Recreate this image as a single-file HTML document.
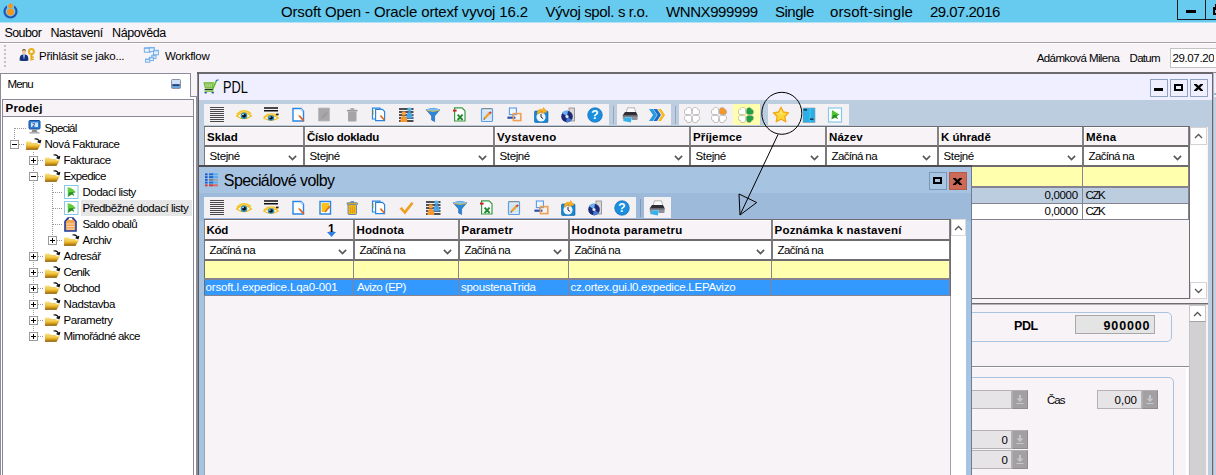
<!DOCTYPE html><html><head><meta charset="utf-8"><title>Orsoft Open</title><style>
html,body{margin:0;padding:0}
body{width:1216px;height:475px;overflow:hidden;position:relative;background:#f7f3f7;font-family:"Liberation Sans",sans-serif;font-size:11px;color:#000}
div,span{position:absolute;box-sizing:border-box;white-space:nowrap}
svg{position:absolute;overflow:visible}
.t{line-height:14px;height:14px}
.b{font-weight:bold;letter-spacing:.55px}
.hc{background:#f7f3f7;border:1px solid #848284;border-top:0;border-bottom:2px solid #6e6c6e;box-shadow:inset 1px 1px 0 #fff;height:20px}
.hc span{left:3px;top:2px;font-weight:bold;letter-spacing:.55px;line-height:14px}
.fc{background:#fff;border:1px solid #7a787a;border-top:0;border-bottom:2px solid #6e6c6e;height:20px}
.fc span{left:5px;top:2px;line-height:14px}
.btn{background:#f4f1f5;height:21px;width:27px}
.wb{border:1px solid #8ea2c2;background:#efefff;width:18px;height:18px}
</style></head><body><svg width="0" height="0" style="left:0;top:0"><defs><linearGradient id="fg1" x1="0" y1="0" x2="0" y2="1"><stop offset="0" stop-color="#fbd85a"/><stop offset=".5" stop-color="#e0a820"/><stop offset="1" stop-color="#8a5a08"/></linearGradient><linearGradient id="fg2" x1="0" y1="0" x2="0" y2="1"><stop offset="0" stop-color="#ffe680"/><stop offset="1" stop-color="#c89018"/></linearGradient></defs></svg>
<div style="left:0;top:0;width:1216px;height:22px;background:#67cbef"></div>
<div style="left:0;top:22px;width:1216px;height:1px;background:#b4e0f3"></div>
<span style="left:281px;top:2px;font-size:15px;line-height:20px;letter-spacing:-0.15px">Orsoft Open - Oracle ortexf vyvoj 16.2</span>
<span style="left:545.5px;top:2px;font-size:15px;line-height:20px;letter-spacing:-0.36px">Vývoj spol. s r.o.</span>
<span style="left:666px;top:2px;font-size:15px;line-height:20px;letter-spacing:-0.41px">WNNX999999</span>
<span style="left:775px;top:2px;font-size:15px;line-height:20px;letter-spacing:-0.49px">Single</span>
<span style="left:830px;top:2px;font-size:15px;line-height:20px;letter-spacing:0.1px">orsoft-single</span>
<span style="left:930px;top:2px;font-size:15px;line-height:20px;letter-spacing:-0.53px">29.07.2016</span>
<svg style="left:3px;top:3px" width="16" height="16" viewBox="0 0 16 16"><circle cx="7.5" cy="8.5" r="6" fill="none" stroke="#2255b8" stroke-width="2.2"/><rect x="4" y="0" width="7" height="5" fill="#67cbef"/><circle cx="7.5" cy="9" r="3.6" fill="#f7941d"/><circle cx="7.5" cy="3" r="2.4" fill="#f7941d"/></svg>
<div style="left:1177px;top:-1px;width:29px;height:21px;border:1px solid #1c1c1c"></div>
<div style="left:1186px;top:10px;width:10px;height:3px;background:#000"></div>
<div style="left:1205px;top:-1px;width:28px;height:21px;border:1px solid #1c1c1c"></div>
<div style="left:1213px;top:7px;width:10px;height:8px;border:2px solid #000;border-top-width:3px"></div>
<div style="left:1215px;top:4px;width:10px;height:3px;background:#000"></div>
<span style="left:4.5px;top:26px;font-size:12.5px;line-height:15px;letter-spacing:-0.6px">Soubor</span>
<span style="left:50.5px;top:26px;font-size:12.5px;line-height:15px;letter-spacing:-0.44px">Nastavení</span>
<span style="left:112px;top:26px;font-size:12.5px;line-height:15px;letter-spacing:-0.4px">Nápověda</span>
<div style="left:0;top:42px;width:1216px;height:1px;background:#a5a3a5"></div>
<div style="left:0;top:43px;width:1216px;height:1px;background:#fff"></div>
<div style="left:4px;top:45px;width:2px;height:2px;background:#c4c2c4"></div>
<div style="left:4px;top:49px;width:2px;height:2px;background:#c4c2c4"></div>
<div style="left:4px;top:53px;width:2px;height:2px;background:#c4c2c4"></div>
<div style="left:4px;top:57px;width:2px;height:2px;background:#c4c2c4"></div>
<div style="left:4px;top:61px;width:2px;height:2px;background:#c4c2c4"></div>
<div style="left:4px;top:65px;width:2px;height:2px;background:#c4c2c4"></div>
<span style="left:39px;top:49px;font-size:11.5px;line-height:14px;letter-spacing:-0.24px">Přihlásit se jako...</span>
<span style="left:165px;top:49px;font-size:11.5px;line-height:14px;letter-spacing:-0.34px">Workflow</span>
<svg style="left:19px;top:48px" width="16" height="14" viewBox="0 0 16 14"><path d="M.6 12.6 Q.4 7.2 3 6.8 L5 6.2 L7 6.8 Q9.6 7.2 9.4 12.6 Q5 13.6 .6 12.6Z" fill="#16307e"/><path d="M4 6.6 L5 11.8 L6 6.6Z" fill="#e8f0ff"/><path d="M4.7 7 L5 11 L5.3 7Z" fill="#2a6cd0"/><ellipse cx="5" cy="3.8" rx="2" ry="2.5" fill="#f0c8a0"/><path d="M2.9 3.6 Q3 .8 5 .9 Q7 .8 7.1 3.6 Q6 2 5 2.2 Q4 2 2.9 3.6Z" fill="#6a4420"/><circle cx="12.4" cy="3.6" r="2.5" fill="none" stroke="#e8b018" stroke-width="2"/><rect x="11.4" y="5.8" width="2" height="6.6" fill="#e0a410"/><rect x="13.2" y="8.4" width="1.6" height="1.4" fill="#e0a410"/><rect x="13.2" y="10.6" width="1.6" height="1.4" fill="#e0a410"/><rect x="11.4" y="5.8" width=".8" height="6.6" fill="#f8d040"/></svg>
<svg style="left:144px;top:47px" width="16" height="16" viewBox="0 0 16 16"><rect x="0.3" y="0.8" width="6.3" height="4.4" fill="#e8f2fc" stroke="#6aa8e8" stroke-width=".9"/><rect x="0.3" y="0.8" width="6.3" height="1.1" fill="#7ab4ec"/><rect x="5.3" y="0.4" width="5" height="4.2" fill="#e8f2fc" stroke="#6aa8e8" stroke-width=".9"/><rect x="5.3" y="0.4" width="5" height="1.1" fill="#7ab4ec"/><rect x="9.5" y="3.3" width="4.9" height="4.5" fill="#e8f2fc" stroke="#6aa8e8" stroke-width=".9"/><rect x="9.5" y="3.3" width="4.9" height="1.1" fill="#7ab4ec"/><rect x="7.8" y="8.2" width="4.2" height="3.3" fill="#e8f2fc" stroke="#6aa8e8" stroke-width=".9"/><rect x="7.8" y="8.2" width="4.2" height="1.1" fill="#7ab4ec"/><rect x="5.3" y="10.3" width="4.2" height="3.3" fill="#e8f2fc" stroke="#6aa8e8" stroke-width=".9"/><rect x="5.3" y="10.3" width="4.2" height="1.1" fill="#7ab4ec"/><rect x="1.6" y="12" width="4.2" height="3.2" fill="#e8f2fc" stroke="#6aa8e8" stroke-width=".9"/><rect x="1.6" y="12" width="4.2" height="1.1" fill="#7ab4ec"/></svg>
<span style="left:1036.7px;top:51px;font-size:11.5px;line-height:14px;letter-spacing:-0.59px">Adámková Milena</span>
<span style="left:1129.6px;top:51px;font-size:11.5px;line-height:14px;letter-spacing:-0.75px">Datum</span>
<div style="left:1170px;top:48px;width:60px;height:20px;background:#fff;border:1px solid #c3c3c3"></div>
<span style="left:1172.5px;top:51px;font-size:11.5px;line-height:14px;letter-spacing:-0.38px">29.07.2016</span>
<div style="left:1214px;top:49px;width:2px;height:18px;background:#fff"></div>
<div style="left:0;top:73px;width:197px;height:410px;border:1px solid #8e8c9a;border-top:0;background:#fff"></div>
<div style="left:0;top:73px;width:191px;height:1px;background:#8e8c9a"></div>
<div style="left:191px;top:73px;width:6px;height:24px;background:#f7f3f7"></div>
<div style="left:190px;top:73px;width:1px;height:24px;background:#8e8c9a"></div>
<div style="left:190px;top:96px;width:7px;height:1px;background:#8e8c9a"></div>
<span style="left:7.5px;top:77px;font-size:11.5px;line-height:14px;letter-spacing:-0.85px">Menu</span>
<svg style="left:171px;top:79px" width="10" height="10" viewBox="0 0 10 10"><rect x=".5" y=".5" width="9" height="9" rx="1" fill="#6aa2e0" stroke="#8a94a4"/><rect x="1" y="1" width="8" height="4" fill="#cfe0f6"/><rect x="1.5" y="5.4" width="7" height="1.4" fill="#1a2a58"/></svg>
<div style="left:2px;top:99px;width:192px;height:18px;border:1px solid #8a8896;background:#f7f3f7"></div>
<span style="left:5.5px;top:101px;font-size:11.5px;line-height:14px;letter-spacing:0.22px;font-weight:bold">Prodej</span>
<div style="left:2px;top:117px;width:192px;height:360px;border:1px solid #8a8896;border-top:0;background:#fff"></div>
<div style="left:14px;top:128px;width:1px;height:11px;background:repeating-linear-gradient(180deg,#9a9a9a 0 1px,transparent 1px 2px)"></div>
<div style="left:15px;top:128px;width:11px;height:1px;background:repeating-linear-gradient(90deg,#9a9a9a 0 1px,transparent 1px 2px)"></div>
<div style="left:33px;top:152px;width:1px;height:184px;background:repeating-linear-gradient(180deg,#9a9a9a 0 1px,transparent 1px 2px)"></div>
<div style="left:52px;top:184px;width:1px;height:56px;background:repeating-linear-gradient(180deg,#9a9a9a 0 1px,transparent 1px 2px)"></div>
<svg style="left:27px;top:120px" width="15" height="15" viewBox="0 0 15 15"><rect x="2" y=".5" width="11" height="8.5" rx="1" fill="#2a7fd8" stroke="#1a4f98"/><rect x="4" y="2.5" width="7" height="4.5" fill="#cfe6ff"/><path d="M5.5 9.5 H9.5 L10.5 12 H4.5Z" fill="#8a8a8a"/><rect x="2.5" y="12" width="10" height="1.6" fill="#b0b0b0"/><text x="5.2" y="6.8" font-size="5" font-family="Liberation Sans" fill="#1a3f88" font-weight="bold">2</text></svg>
<span style="left:44.5px;top:121px;font-size:11.5px;line-height:14px;letter-spacing:-0.83px">Speciál</span>
<div style="left:15px;top:144px;width:10px;height:1px;background:repeating-linear-gradient(90deg,#9a9a9a 0 1px,transparent 1px 2px)"></div>
<svg style="left:25px;top:137px" width="17" height="14" viewBox="0 0 17 14"><path d="M1 4.5 H5.5 L7 6 H12.5 V12.5 H1 Z" fill="url(#fg2)"/><path d="M0.6 12.8 L3.6 7.2 H15.8 L12.6 12.8 Z" fill="url(#fg1)"/><path d="M9.5 2 Q13.5 1 14.8 5 M12.6 4.6 L15 5.6 L15.8 3" fill="none" stroke="#111" stroke-width="1.2"/></svg>
<div style="left:10px;top:140px;width:9px;height:9px;border:1px solid #9a9a9a;background:#fff"></div><div style="left:12px;top:144px;width:5px;height:1px;background:#000"></div>
<span style="left:44.5px;top:137px;font-size:11.5px;line-height:14px;letter-spacing:-0.44px">Nová Fakturace</span>
<div style="left:34px;top:160px;width:10px;height:1px;background:repeating-linear-gradient(90deg,#9a9a9a 0 1px,transparent 1px 2px)"></div>
<svg style="left:44px;top:153px" width="17" height="14" viewBox="0 0 17 14"><path d="M1 4.5 H5.5 L7 6 H12.5 V12.5 H1 Z" fill="url(#fg2)"/><path d="M0.6 12.8 L3.6 7.2 H15.8 L12.6 12.8 Z" fill="url(#fg1)"/><path d="M9.5 2 Q13.5 1 14.8 5 M12.6 4.6 L15 5.6 L15.8 3" fill="none" stroke="#111" stroke-width="1.2"/></svg>
<div style="left:29px;top:156px;width:9px;height:9px;border:1px solid #9a9a9a;background:#fff"></div><div style="left:31px;top:160px;width:5px;height:1px;background:#000"></div><div style="left:33px;top:158px;width:1px;height:5px;background:#000"></div>
<span style="left:63.5px;top:153px;font-size:11.5px;line-height:14px;letter-spacing:-0.43px">Fakturace</span>
<div style="left:34px;top:176px;width:10px;height:1px;background:repeating-linear-gradient(90deg,#9a9a9a 0 1px,transparent 1px 2px)"></div>
<svg style="left:44px;top:169px" width="17" height="14" viewBox="0 0 17 14"><path d="M1 4.5 H5.5 L7 6 H12.5 V12.5 H1 Z" fill="url(#fg2)"/><path d="M0.6 12.8 L3.6 7.2 H15.8 L12.6 12.8 Z" fill="url(#fg1)"/><path d="M9.5 2 Q13.5 1 14.8 5 M12.6 4.6 L15 5.6 L15.8 3" fill="none" stroke="#111" stroke-width="1.2"/></svg>
<div style="left:29px;top:172px;width:9px;height:9px;border:1px solid #9a9a9a;background:#fff"></div><div style="left:31px;top:176px;width:5px;height:1px;background:#000"></div>
<span style="left:63.5px;top:169px;font-size:11.5px;line-height:14px;letter-spacing:-0.64px">Expedice</span>
<div style="left:53px;top:192px;width:10px;height:1px;background:repeating-linear-gradient(90deg,#9a9a9a 0 1px,transparent 1px 2px)"></div>
<svg style="left:64px;top:185px" width="15" height="14" viewBox="0 0 15 14"><rect x=".5" y=".5" width="13.5" height="13" fill="#fff" stroke="#86c8ec"/><path d="M3.6 2.2 Q8.4 3 11.8 7 L8.8 8 L10.4 10.8 L7.6 9.6 L3.8 11.8 Z" fill="#62cc40"/><path d="M3.8 11.8 L5.2 7.2 L11.8 7 L8.8 8 L10.4 10.8 L7.6 9.6 Z" fill="#2a8e30"/></svg>
<span style="left:82.5px;top:185px;font-size:11.5px;line-height:14px;letter-spacing:-0.51px">Dodací listy</span>
<div style="left:53px;top:208px;width:10px;height:1px;background:repeating-linear-gradient(90deg,#9a9a9a 0 1px,transparent 1px 2px)"></div>
<svg style="left:64px;top:201px" width="15" height="14" viewBox="0 0 15 14"><rect x=".5" y=".5" width="13.5" height="13" fill="#fff" stroke="#86c8ec"/><path d="M3.6 2.2 Q8.4 3 11.8 7 L8.8 8 L10.4 10.8 L7.6 9.6 L3.8 11.8 Z" fill="#62cc40"/><path d="M3.8 11.8 L5.2 7.2 L11.8 7 L8.8 8 L10.4 10.8 L7.6 9.6 Z" fill="#2a8e30"/></svg>
<div style="left:81px;top:200px;width:111px;height:16px;background:#e6e6e6"></div>
<span style="left:82.5px;top:201px;font-size:11.5px;line-height:14px;letter-spacing:-0.48px">Předběžné dodací listy</span>
<div style="left:53px;top:224px;width:10px;height:1px;background:repeating-linear-gradient(90deg,#9a9a9a 0 1px,transparent 1px 2px)"></div>
<svg style="left:64px;top:217px" width="14" height="15" viewBox="0 0 14 15"><path d="M1 4.5 L4 1 H9 L12 4.5 V14 H1 Z" fill="#f2a456" stroke="#1a3aa0" stroke-width="1.6"/><path d="M5 1 H8 L8 3 H5Z" fill="#fff"/><path d="M2.5 7 H10.5 M2.5 9.5 H10.5 M2.5 12 H10.5" stroke="#fbd8b0" stroke-width="1"/></svg>
<span style="left:82.5px;top:217px;font-size:11.5px;line-height:14px;letter-spacing:-0.57px">Saldo obalů</span>
<div style="left:53px;top:240px;width:10px;height:1px;background:repeating-linear-gradient(90deg,#9a9a9a 0 1px,transparent 1px 2px)"></div>
<svg style="left:63px;top:233px" width="17" height="14" viewBox="0 0 17 14"><path d="M1 4.5 H5.5 L7 6 H12.5 V12.5 H1 Z" fill="url(#fg2)"/><path d="M0.6 12.8 L3.6 7.2 H15.8 L12.6 12.8 Z" fill="url(#fg1)"/><path d="M9.5 2 Q13.5 1 14.8 5 M12.6 4.6 L15 5.6 L15.8 3" fill="none" stroke="#111" stroke-width="1.2"/></svg>
<div style="left:48px;top:236px;width:9px;height:9px;border:1px solid #9a9a9a;background:#fff"></div><div style="left:50px;top:240px;width:5px;height:1px;background:#000"></div><div style="left:52px;top:238px;width:1px;height:5px;background:#000"></div>
<span style="left:82.5px;top:233px;font-size:11.5px;line-height:14px;letter-spacing:-0.54px">Archiv</span>
<div style="left:34px;top:256px;width:10px;height:1px;background:repeating-linear-gradient(90deg,#9a9a9a 0 1px,transparent 1px 2px)"></div>
<svg style="left:44px;top:249px" width="17" height="14" viewBox="0 0 17 14"><path d="M1 4.5 H5.5 L7 6 H12.5 V12.5 H1 Z" fill="url(#fg2)"/><path d="M0.6 12.8 L3.6 7.2 H15.8 L12.6 12.8 Z" fill="url(#fg1)"/><path d="M9.5 2 Q13.5 1 14.8 5 M12.6 4.6 L15 5.6 L15.8 3" fill="none" stroke="#111" stroke-width="1.2"/></svg>
<div style="left:29px;top:252px;width:9px;height:9px;border:1px solid #9a9a9a;background:#fff"></div><div style="left:31px;top:256px;width:5px;height:1px;background:#000"></div><div style="left:33px;top:254px;width:1px;height:5px;background:#000"></div>
<span style="left:63.5px;top:249px;font-size:11.5px;line-height:14px;letter-spacing:-0.44px">Adresář</span>
<div style="left:34px;top:272px;width:10px;height:1px;background:repeating-linear-gradient(90deg,#9a9a9a 0 1px,transparent 1px 2px)"></div>
<svg style="left:44px;top:265px" width="17" height="14" viewBox="0 0 17 14"><path d="M1 4.5 H5.5 L7 6 H12.5 V12.5 H1 Z" fill="url(#fg2)"/><path d="M0.6 12.8 L3.6 7.2 H15.8 L12.6 12.8 Z" fill="url(#fg1)"/><path d="M9.5 2 Q13.5 1 14.8 5 M12.6 4.6 L15 5.6 L15.8 3" fill="none" stroke="#111" stroke-width="1.2"/></svg>
<div style="left:29px;top:268px;width:9px;height:9px;border:1px solid #9a9a9a;background:#fff"></div><div style="left:31px;top:272px;width:5px;height:1px;background:#000"></div><div style="left:33px;top:270px;width:1px;height:5px;background:#000"></div>
<span style="left:63.5px;top:265px;font-size:11.5px;line-height:14px;letter-spacing:-0.9px">Ceník</span>
<div style="left:34px;top:288px;width:10px;height:1px;background:repeating-linear-gradient(90deg,#9a9a9a 0 1px,transparent 1px 2px)"></div>
<svg style="left:44px;top:281px" width="17" height="14" viewBox="0 0 17 14"><path d="M1 4.5 H5.5 L7 6 H12.5 V12.5 H1 Z" fill="url(#fg2)"/><path d="M0.6 12.8 L3.6 7.2 H15.8 L12.6 12.8 Z" fill="url(#fg1)"/><path d="M9.5 2 Q13.5 1 14.8 5 M12.6 4.6 L15 5.6 L15.8 3" fill="none" stroke="#111" stroke-width="1.2"/></svg>
<div style="left:29px;top:284px;width:9px;height:9px;border:1px solid #9a9a9a;background:#fff"></div><div style="left:31px;top:288px;width:5px;height:1px;background:#000"></div><div style="left:33px;top:286px;width:1px;height:5px;background:#000"></div>
<span style="left:63.5px;top:281px;font-size:11.5px;line-height:14px;letter-spacing:-0.67px">Obchod</span>
<div style="left:34px;top:304px;width:10px;height:1px;background:repeating-linear-gradient(90deg,#9a9a9a 0 1px,transparent 1px 2px)"></div>
<svg style="left:44px;top:297px" width="17" height="14" viewBox="0 0 17 14"><path d="M1 4.5 H5.5 L7 6 H12.5 V12.5 H1 Z" fill="url(#fg2)"/><path d="M0.6 12.8 L3.6 7.2 H15.8 L12.6 12.8 Z" fill="url(#fg1)"/><path d="M9.5 2 Q13.5 1 14.8 5 M12.6 4.6 L15 5.6 L15.8 3" fill="none" stroke="#111" stroke-width="1.2"/></svg>
<div style="left:29px;top:300px;width:9px;height:9px;border:1px solid #9a9a9a;background:#fff"></div><div style="left:31px;top:304px;width:5px;height:1px;background:#000"></div><div style="left:33px;top:302px;width:1px;height:5px;background:#000"></div>
<span style="left:63.5px;top:297px;font-size:11.5px;line-height:14px;letter-spacing:-0.37px">Nadstavba</span>
<div style="left:34px;top:320px;width:10px;height:1px;background:repeating-linear-gradient(90deg,#9a9a9a 0 1px,transparent 1px 2px)"></div>
<svg style="left:44px;top:313px" width="17" height="14" viewBox="0 0 17 14"><path d="M1 4.5 H5.5 L7 6 H12.5 V12.5 H1 Z" fill="url(#fg2)"/><path d="M0.6 12.8 L3.6 7.2 H15.8 L12.6 12.8 Z" fill="url(#fg1)"/><path d="M9.5 2 Q13.5 1 14.8 5 M12.6 4.6 L15 5.6 L15.8 3" fill="none" stroke="#111" stroke-width="1.2"/></svg>
<div style="left:29px;top:316px;width:9px;height:9px;border:1px solid #9a9a9a;background:#fff"></div><div style="left:31px;top:320px;width:5px;height:1px;background:#000"></div><div style="left:33px;top:318px;width:1px;height:5px;background:#000"></div>
<span style="left:63.5px;top:313px;font-size:11.5px;line-height:14px;letter-spacing:-0.44px">Parametry</span>
<div style="left:34px;top:336px;width:10px;height:1px;background:repeating-linear-gradient(90deg,#9a9a9a 0 1px,transparent 1px 2px)"></div>
<svg style="left:44px;top:329px" width="17" height="14" viewBox="0 0 17 14"><path d="M1 4.5 H5.5 L7 6 H12.5 V12.5 H1 Z" fill="url(#fg2)"/><path d="M0.6 12.8 L3.6 7.2 H15.8 L12.6 12.8 Z" fill="url(#fg1)"/><path d="M9.5 2 Q13.5 1 14.8 5 M12.6 4.6 L15 5.6 L15.8 3" fill="none" stroke="#111" stroke-width="1.2"/></svg>
<div style="left:29px;top:332px;width:9px;height:9px;border:1px solid #9a9a9a;background:#fff"></div><div style="left:31px;top:336px;width:5px;height:1px;background:#000"></div><div style="left:33px;top:334px;width:1px;height:5px;background:#000"></div>
<span style="left:63.5px;top:329px;font-size:11.5px;line-height:14px;letter-spacing:-0.62px">Mimořádné akce</span>
<div style="left:197px;top:72px;width:1016px;height:410px;border:1px solid #6b696b;border-left:2px solid #5e5c5e;border-top:2px solid #6b696b;background:#f7f3f7"></div>
<div style="left:197px;top:74px;width:1px;height:410px;background:#8e8c90"></div>
<div style="left:199px;top:74px;width:1013px;height:26px;background:#efefff"></div>
<span style="left:223px;top:78.6px;font-size:16px;line-height:18px;transform:scaleX(.8);transform-origin:0 0">PDL</span>
<svg style="left:203px;top:79px" width="16" height="15" viewBox="0 0 16 15"><path d="M.8 3.6 H10.6 L9.4 9.2 H2.2 Z" fill="#7ccc2c" stroke="#5aa81c" stroke-width=".6"/><path d="M3 4.6 V8.2 M4.8 4.6 V8.2 M6.6 4.6 V8.2 M8.4 4.6 V8.2" stroke="#c8ccd0" stroke-width=".9"/><path d="M9.2 11.4 L13.4 1.6" fill="none" stroke="#5cb820" stroke-width="1.4"/><path d="M13 1.6 L15.6 .8" stroke="#2a6cd0" stroke-width="1.2"/><path d="M1.6 10.6 H9.6" stroke="#1a1a1a" stroke-width="1.1"/><path d="M1.6 12.2 H10.6" stroke="#6cc424" stroke-width="1.3"/><rect x="1.6" y="13" width="2.2" height="1.4" fill="#1a4cb0"/><rect x="8.6" y="13" width="2.2" height="1.4" fill="#1a4cb0"/></svg>
<div class="wb" style="left:1150px;top:79px"></div>
<div class="wb" style="left:1170px;top:79px"></div>
<div class="wb" style="left:1190px;top:79px"></div>
<div style="left:1154px;top:88px;width:9px;height:3px;background:#000"></div>
<div style="left:1174px;top:84px;width:9px;height:7px;border:2px solid #000"></div>
<svg style="left:1194px;top:84px;overflow:hidden" width="9" height="7" viewBox="0 0 9 7"><path d="M.4 -.5 L8.6 7.5 M8.6 -.5 L.4 7.5" stroke="#000" stroke-width="2.3"/></svg>
<div style="left:199px;top:100px;width:1013px;height:27px;background:#bccddf"></div>
<div style="left:199px;top:127px;width:10px;height:360px;background:#bccddf"></div>
<div style="left:1208px;top:127px;width:4px;height:360px;background:#bccddf"></div>
<div class="btn" style="left:204px;top:104px;background:#f4f1f5"></div>
<svg style="left:209px;top:107px" width="16" height="16" viewBox="0 0 16 16"><path d="M1 .5 H15 M1 2.5 H15 M1 4.5 H15 M1 6.5 H15 M1 8.5 H15 M1 10.5 H15 M1 12.5 H15 M1 14.5 H15" stroke="#484848" stroke-width="1" shape-rendering="crispEdges"/></svg>
<div class="btn" style="left:231px;top:104px;background:#f4f1f5"></div>
<svg style="left:236px;top:107px" width="16" height="16" viewBox="0 0 16 16"><path d="M.6 9 Q8 2 15.4 9 Q8 14.4 .6 9Z" fill="#fdf8e4" stroke="#f0bc18" stroke-width="1.2"/><path d="M.8 7.4 Q8 .6 15 6.6" fill="none" stroke="#f4c41c" stroke-width="1.6"/><path d="M4 3.4 L4.6 5" stroke="#f4c41c" stroke-width=".9"/><circle cx="8" cy="8.8" r="3.3" fill="#2a8cc0"/><circle cx="8" cy="8.6" r="1.9" fill="#05080c"/><circle cx="7" cy="7.6" r=".8" fill="#fff"/></svg>
<div class="btn" style="left:258px;top:104px;background:#f4f1f5"></div>
<svg style="left:263px;top:107px" width="16" height="16" viewBox="0 0 16 16"><path d="M1 1 H15 M1 3.8 H15" stroke="#111" stroke-width="1.4"/><g transform="translate(0,3.8) scale(1,.82)"><path d="M.6 9 Q8 2 15.4 9 Q8 14.4 .6 9Z" fill="#fdf8e4" stroke="#f0bc18" stroke-width="1.2"/><path d="M.8 7.4 Q8 .6 15 6.6" fill="none" stroke="#f4c41c" stroke-width="1.6"/><path d="M4 3.4 L4.6 5" stroke="#f4c41c" stroke-width=".9"/><circle cx="8" cy="8.8" r="3.3" fill="#2a8cc0"/><circle cx="8" cy="8.6" r="1.9" fill="#05080c"/><circle cx="7" cy="7.6" r=".8" fill="#fff"/></g><rect x="13" y="6.6" width="2.6" height="1.6" fill="#222"/></svg>
<div class="btn" style="left:285px;top:104px;background:#f4f1f5"></div>
<svg style="left:290px;top:107px" width="16" height="16" viewBox="0 0 16 16"><path d="M3 1.5 H11 L13.5 4 V14 H3 Z" fill="#fff" stroke="#2a86e0" stroke-width="1.4"/><path d="M11 1.5 V4 H13.5" fill="#d6e8fa" stroke="#8ab8e8" stroke-width=".6"/><path d="M9 8.5 L13.8 13.8" stroke="#e06020" stroke-width="1.8"/><path d="M8 7.4 L10 8.3 L8.8 9.6Z" fill="#f0c070"/></svg>
<div class="btn" style="left:312px;top:104px;background:#f4f1f5"></div>
<svg style="left:317px;top:107px" width="16" height="16" viewBox="0 0 16 16"><path d="M1.5 1 H12.5 V14 H1.5 Z" fill="#a8a6a8" stroke="#bcbabc" stroke-width=".8"/><path d="M5 11 L10 5.5" stroke="#9a989a" stroke-width="1.8"/></svg>
<div class="btn" style="left:339px;top:104px;background:#f4f1f5"></div>
<svg style="left:344px;top:107px" width="16" height="16" viewBox="0 0 16 16"><rect x="4" y="4.5" width="8.5" height="10" rx="1" fill="#a6a4a6"/><rect x="3" y="2.7" width="10.5" height="1.8" rx=".5" fill="#9c9a9c"/><rect x="6.5" y="1.2" width="3.6" height="1.5" fill="#9c9a9c"/></svg>
<div class="btn" style="left:366px;top:104px;background:#f4f1f5"></div>
<svg style="left:371px;top:107px" width="16" height="16" viewBox="0 0 16 16"><path d="M1.5 1.2 H9 V12 H1.5 Z" fill="#fff" stroke="#2a86e0" stroke-width="1.2"/><path d="M2.6 3 V8" stroke="#f8c840" stroke-width="1"/><path d="M4.6 2.4 H11.4 L13.6 4.6 V13.6 H4.6 Z" fill="#fff" stroke="#2a86e0" stroke-width="1.2"/><path d="M9.4 8.6 L13.4 13" stroke="#e06820" stroke-width="1.6"/><path d="M8.6 7.6 L10.3 8.4 L9.2 9.5Z" fill="#f0c070"/></svg>
<div class="btn" style="left:393px;top:104px;background:#f4f1f5"></div>
<svg style="left:398px;top:107px" width="16" height="16" viewBox="0 0 16 16"><path d="M1 2 H15.5 M1 5 H15.5 M1 8 H15.5 M1 11 H15.5 M1 14 H15.5" stroke="#1a1a1a" stroke-width="1.4"/><circle cx="11.5" cy="2.6" r="2.2" fill="#5ab0e8"/><path d="M8.4 11.6 Q8.2 5 11.5 5 Q14.8 5 14.6 11.6Z" fill="#4aa4e4"/><circle cx="5.8" cy="6.4" r="2.2" fill="#f8a040"/><path d="M2.4 15 Q2.2 8.8 5.8 8.8 Q9.4 8.8 9.2 15Z" fill="#f89830"/></svg>
<div class="btn" style="left:420px;top:104px;background:#f4f1f5"></div>
<svg style="left:425px;top:107px" width="16" height="16" viewBox="0 0 16 16"><path d="M1.2 2.8 Q8 -.2 14.8 2.8 L9.6 9 V14.6 L6.6 13 V9 Z" fill="#2a86d8" stroke="#1a5cae" stroke-width=".6"/><ellipse cx="8" cy="2.8" rx="6.4" ry="1.5" fill="#7cc0f4"/><path d="M1.8 3.3 Q8 5.6 14.2 3.3" fill="none" stroke="#e8b838" stroke-width=".9"/></svg>
<div class="btn" style="left:447px;top:104px;background:#f4f1f5"></div>
<svg style="left:452px;top:107px" width="16" height="16" viewBox="0 0 16 16"><path d="M2.6 .8 H10 L13 3.8 V14 H2.6 Z" fill="#fff" stroke="#3a9a44" stroke-width="1.2"/><rect x="1" y="2.6" width="3.6" height="2" fill="#d42020"/><path d="M5.6 7.6 L10.6 13 M10.6 7.6 L5.6 13" stroke="#1e8a2c" stroke-width="1.9"/></svg>
<div class="btn" style="left:474px;top:104px;background:#f4f1f5"></div>
<svg style="left:479px;top:107px" width="16" height="16" viewBox="0 0 16 16"><rect x="2.5" y="1.5" width="11" height="13" rx="1" fill="#dcecfc" stroke="#5a9fe0" stroke-width="1.2"/><path d="M3.5 5 H12.5 M3.5 7 H12.5 M3.5 9 H12.5 M3.5 11 H12.5" stroke="#b8d4f0" stroke-width=".6"/><path d="M4 1 V2.6 M6 1 V2.6 M8 1 V2.6 M10 1 V2.6 M12 1 V2.6" stroke="#9a7a4a" stroke-width=".8"/><path d="M5.4 11.6 L11 5.6" stroke="#f0a020" stroke-width="2.2"/><path d="M4.4 12.8 L6.2 12.2 L5 11Z" fill="#333"/><path d="M10.6 5 L12 6.4" stroke="#d84040" stroke-width="2.2"/></svg>
<div class="btn" style="left:501px;top:104px;background:#f4f1f5"></div>
<svg style="left:506px;top:107px" width="16" height="16" viewBox="0 0 16 16"><rect x="3.4" y="1" width="7" height="6.6" fill="#f0f6ff" stroke="#5a9ae8" stroke-width="1.1"/><rect x="1.4" y="9.6" width="8" height="2.2" fill="#2a50b0"/><path d="M6.8 7.6 V9.6" stroke="#5a9ae8" stroke-width="1.2"/><rect x="7.4" y="6.6" width="7.4" height="7" fill="none" stroke="#f0a050" stroke-width="1.6"/></svg>
<div class="btn" style="left:528px;top:104px;background:#f4f1f5"></div>
<svg style="left:533px;top:107px" width="16" height="16" viewBox="0 0 16 16"><rect x="1.5" y="4" width="13.5" height="11.5" rx="1" fill="#1a86d0" stroke="#0a5fa8" stroke-width=".6"/><circle cx="8" cy="10" r="4.6" fill="#eef6ff"/><path d="M8 7 V10 L10.2 11.6" stroke="#223" stroke-width="1" fill="none"/><path d="M4 6.5 Q5 1 10 2.5 L10.5 .5 L14 5 L8.5 6.5 L9.3 4.6 Q6.5 4 6 7Z" fill="#fbb21c" stroke="#e89010" stroke-width=".5"/></svg>
<div class="btn" style="left:555px;top:104px;background:#f4f1f5"></div>
<svg style="left:560px;top:107px" width="16" height="16" viewBox="0 0 16 16"><rect x="9" y="1" width="5.5" height="13" fill="#d8d8d8" stroke="#888" stroke-width=".8"/><circle cx="7" cy="9.5" r="5.8" fill="#1a2a78"/><path d="M7 9.5 L2 6 A6 6 0 0 1 8 3.7Z" fill="#6ab0f0"/><path d="M7 9.5 L12 13 A6 6 0 0 1 6 15.3Z" fill="#4878d0"/><circle cx="7" cy="9.5" r="1.6" fill="#e8e8f0"/></svg>
<div class="btn" style="left:582px;top:104px;background:#f4f1f5"></div>
<svg style="left:587px;top:107px" width="16" height="16" viewBox="0 0 16 16"><circle cx="8" cy="8" r="7.3" fill="#1a8fe0"/><circle cx="8" cy="8" r="7.3" fill="none" stroke="#0a5fb0" stroke-width=".6"/><text x="8" y="12.3" text-anchor="middle" font-family="Liberation Sans" font-weight="bold" font-size="12" fill="#fff">?</text></svg>
<div style="left:613px;top:106px;width:1px;height:18px;background:#98a8ba"></div>
<div class="btn" style="left:617px;top:104px;background:#f4f1f5"></div>
<svg style="left:622px;top:107px" width="16" height="16" viewBox="0 0 16 16"><path d="M5.5 .8 H12.5 L13.8 5.5 H4.2Z" fill="#fafafa" stroke="#9a9a9a" stroke-width=".7"/><path d="M3 5 H14 L15.6 8.2 H.8Z" fill="#2e2e34"/><path d="M.8 8.2 H15.6 V12 Q15.6 13 14.6 13 H10 V10 H3 V12.5 H.8Z" fill="#90929a"/><path d="M.8 8.2 H15.6 V9.4 H.8Z" fill="#5a5c64"/><path d="M3.2 10.2 H10 L8.8 15.4 L1 14Z" fill="#36b2ea"/></svg>
<div class="btn" style="left:644px;top:104px;background:#f4f1f5"></div>
<svg style="left:649px;top:107px" width="16" height="16" viewBox="0 0 16 16"><path d="M0 2 H4 L8 8 L4 14 H0 L4 8Z" fill="#2a9ae4"/><path d="M4.5 2 H8 L12 8 L8 14 H4.5 L8.5 8Z" fill="#1a6cc4"/><path d="M9 2 H12 L16 8 L12 14 H9 L13 8Z" fill="#f8b818"/></svg>
<div style="left:675px;top:106px;width:1px;height:18px;background:#98a8ba"></div>
<div class="btn" style="left:679px;top:104px;background:#f4f1f5"></div>
<svg style="left:684px;top:107px" width="16" height="16" viewBox="0 0 16 16"><g transform="translate(8,8) scale(1,1)"><g fill="#aeacae" stroke="#aeacae" stroke-width="1.1"><rect x="-5.6" y="-5.6" width="4.9" height="4.9" rx="1.6"/><circle cx="-3.1" cy="-5" r="2.3"/><circle cx="-5" cy="-3.1" r="2.3"/></g><g fill="#fff"><rect x="-5.6" y="-5.6" width="4.9" height="4.9" rx="1.6"/><circle cx="-3.1" cy="-5" r="2.3"/><circle cx="-5" cy="-3.1" r="2.3"/></g></g><g transform="translate(8,8) scale(-1,1)"><g fill="#aeacae" stroke="#aeacae" stroke-width="1.1"><rect x="-5.6" y="-5.6" width="4.9" height="4.9" rx="1.6"/><circle cx="-3.1" cy="-5" r="2.3"/><circle cx="-5" cy="-3.1" r="2.3"/></g><g fill="#fff"><rect x="-5.6" y="-5.6" width="4.9" height="4.9" rx="1.6"/><circle cx="-3.1" cy="-5" r="2.3"/><circle cx="-5" cy="-3.1" r="2.3"/></g></g><g transform="translate(8,8) scale(1,-1)"><g fill="#aeacae" stroke="#aeacae" stroke-width="1.1"><rect x="-5.6" y="-5.6" width="4.9" height="4.9" rx="1.6"/><circle cx="-3.1" cy="-5" r="2.3"/><circle cx="-5" cy="-3.1" r="2.3"/></g><g fill="#fff"><rect x="-5.6" y="-5.6" width="4.9" height="4.9" rx="1.6"/><circle cx="-3.1" cy="-5" r="2.3"/><circle cx="-5" cy="-3.1" r="2.3"/></g></g><g transform="translate(8,8) scale(-1,-1)"><g fill="#aeacae" stroke="#aeacae" stroke-width="1.1"><rect x="-5.6" y="-5.6" width="4.9" height="4.9" rx="1.6"/><circle cx="-3.1" cy="-5" r="2.3"/><circle cx="-5" cy="-3.1" r="2.3"/></g><g fill="#fff"><rect x="-5.6" y="-5.6" width="4.9" height="4.9" rx="1.6"/><circle cx="-3.1" cy="-5" r="2.3"/><circle cx="-5" cy="-3.1" r="2.3"/></g></g></svg>
<div class="btn" style="left:706px;top:104px;background:#f4f1f5"></div>
<svg style="left:711px;top:107px" width="16" height="16" viewBox="0 0 16 16"><g transform="translate(8,8) scale(1,1)"><g fill="#aeacae" stroke="#aeacae" stroke-width="1.1"><rect x="-5.6" y="-5.6" width="4.9" height="4.9" rx="1.6"/><circle cx="-3.1" cy="-5" r="2.3"/><circle cx="-5" cy="-3.1" r="2.3"/></g><g fill="#fff"><rect x="-5.6" y="-5.6" width="4.9" height="4.9" rx="1.6"/><circle cx="-3.1" cy="-5" r="2.3"/><circle cx="-5" cy="-3.1" r="2.3"/></g></g><g transform="translate(8,8) scale(-1,1)"><g fill="#aeacae" stroke="#aeacae" stroke-width="1.1"><rect x="-5.6" y="-5.6" width="4.9" height="4.9" rx="1.6"/><circle cx="-3.1" cy="-5" r="2.3"/><circle cx="-5" cy="-3.1" r="2.3"/></g><g fill="#f8962c"><rect x="-5.6" y="-5.6" width="4.9" height="4.9" rx="1.6"/><circle cx="-3.1" cy="-5" r="2.3"/><circle cx="-5" cy="-3.1" r="2.3"/></g></g><g transform="translate(8,8) scale(1,-1)"><g fill="#aeacae" stroke="#aeacae" stroke-width="1.1"><rect x="-5.6" y="-5.6" width="4.9" height="4.9" rx="1.6"/><circle cx="-3.1" cy="-5" r="2.3"/><circle cx="-5" cy="-3.1" r="2.3"/></g><g fill="#fff"><rect x="-5.6" y="-5.6" width="4.9" height="4.9" rx="1.6"/><circle cx="-3.1" cy="-5" r="2.3"/><circle cx="-5" cy="-3.1" r="2.3"/></g></g><g transform="translate(8,8) scale(-1,-1)"><g fill="#aeacae" stroke="#aeacae" stroke-width="1.1"><rect x="-5.6" y="-5.6" width="4.9" height="4.9" rx="1.6"/><circle cx="-3.1" cy="-5" r="2.3"/><circle cx="-5" cy="-3.1" r="2.3"/></g><g fill="#fff"><rect x="-5.6" y="-5.6" width="4.9" height="4.9" rx="1.6"/><circle cx="-3.1" cy="-5" r="2.3"/><circle cx="-5" cy="-3.1" r="2.3"/></g></g></svg>
<div class="btn" style="left:733px;top:104px;background:#f4f1f5;background:#ffffad"></div>
<svg style="left:738px;top:107px" width="16" height="16" viewBox="0 0 16 16"><g transform="translate(8,8) scale(1,1)"><g fill="#b4b890" stroke="#b4b890" stroke-width="1.1"><rect x="-5.6" y="-5.6" width="4.9" height="4.9" rx="1.6"/><circle cx="-3.1" cy="-5" r="2.3"/><circle cx="-5" cy="-3.1" r="2.3"/></g><g fill="#fff"><rect x="-5.6" y="-5.6" width="4.9" height="4.9" rx="1.6"/><circle cx="-3.1" cy="-5" r="2.3"/><circle cx="-5" cy="-3.1" r="2.3"/></g></g><g transform="translate(8,8) scale(-1,1)"><g fill="#b4b890" stroke="#b4b890" stroke-width="1.1"><rect x="-5.6" y="-5.6" width="4.9" height="4.9" rx="1.6"/><circle cx="-3.1" cy="-5" r="2.3"/><circle cx="-5" cy="-3.1" r="2.3"/></g><g fill="#1fa045"><rect x="-5.6" y="-5.6" width="4.9" height="4.9" rx="1.6"/><circle cx="-3.1" cy="-5" r="2.3"/><circle cx="-5" cy="-3.1" r="2.3"/></g></g><g transform="translate(8,8) scale(1,-1)"><g fill="#b4b890" stroke="#b4b890" stroke-width="1.1"><rect x="-5.6" y="-5.6" width="4.9" height="4.9" rx="1.6"/><circle cx="-3.1" cy="-5" r="2.3"/><circle cx="-5" cy="-3.1" r="2.3"/></g><g fill="#fff"><rect x="-5.6" y="-5.6" width="4.9" height="4.9" rx="1.6"/><circle cx="-3.1" cy="-5" r="2.3"/><circle cx="-5" cy="-3.1" r="2.3"/></g></g><g transform="translate(8,8) scale(-1,-1)"><g fill="#b4b890" stroke="#b4b890" stroke-width="1.1"><rect x="-5.6" y="-5.6" width="4.9" height="4.9" rx="1.6"/><circle cx="-3.1" cy="-5" r="2.3"/><circle cx="-5" cy="-3.1" r="2.3"/></g><g fill="#1fa045"><rect x="-5.6" y="-5.6" width="4.9" height="4.9" rx="1.6"/><circle cx="-3.1" cy="-5" r="2.3"/><circle cx="-5" cy="-3.1" r="2.3"/></g></g></svg>
<div class="btn" style="left:768px;top:104px;background:#f4f1f5"></div>
<svg style="left:773px;top:107px" width="16" height="16" viewBox="0 0 16 16"><path d="M8 .2 L10.4 5 L15.6 5.8 L11.8 9.5 L12.8 14.8 L8 12.2 L3.2 14.8 L4.2 9.5 L.4 5.8 L5.6 5Z" fill="#fdd835" stroke="#f2a71b" stroke-width="1.3" stroke-linejoin="round"/><path d="M8 2.6 L9.6 6 L13.2 6.6 L8 7.5 L2.8 6.6 L6.4 6Z" fill="#fee66a"/></svg>
<div class="btn" style="left:795px;top:104px;background:#f4f1f5"></div>
<svg style="left:800px;top:107px" width="16" height="16" viewBox="0 0 16 16"><rect x="3" y="1" width="12" height="14.5" fill="#2ab0e8" stroke="#8a9aa8" stroke-width=".6"/><rect x="9.5" y="1.3" width="1" height="14" fill="#50c4f0"/><rect x="3.5" y="2.2" width="3.5" height="1.3" fill="#123"/><rect x="10" y="11.5" width="3.5" height="1.3" fill="#123"/></svg>
<div class="btn" style="left:822px;top:104px;background:#f4f1f5"></div>
<svg style="left:827px;top:107px" width="16" height="16" viewBox="0 0 16 16"><rect x="1.5" y="1" width="13" height="14" fill="#fff" stroke="#86c8ec" stroke-width="1.2"/><path d="M5 3 L12.5 7.5 L9.4 9 L11 12 L8 10.5 L4.5 12.2 Z" fill="#52c434"/><path d="M4.5 12.2 L6.3 8 L12.5 7.5 L9.4 9 L11 12 L8 10.5 Z" fill="#2a8a2e"/></svg>
<div style="left:204px;top:126px;width:986px;height:173px;background:#6e6c6e"></div>
<div style="left:205px;top:127px;width:984px;height:171px;background:#f7f3f7"></div>
<div class="hc" style="left:204px;top:127px;width:100px;height:20px"></div>
<span style="left:207px;top:130px;font-size:11.5px;line-height:14px;letter-spacing:0.03px;font-weight:bold">Sklad</span>
<div class="fc" style="left:204px;top:147px;width:100px;height:20px"></div>
<span style="left:209.5px;top:149px;font-size:11.5px;line-height:14px;letter-spacing:-0.37px">Stejné</span>
<svg style="left:288px;top:155px" width="9" height="6" viewBox="0 0 9 6"><path d="M.9 .9 L4.5 4.5 L8.1 .9" fill="none" stroke="#585858" stroke-width="1.7"/></svg>
<div class="hc" style="left:304px;top:127px;width:190px;height:20px"></div>
<span style="left:307px;top:130px;font-size:11.5px;line-height:14px;letter-spacing:-0.27px;font-weight:bold">Číslo dokladu</span>
<div class="fc" style="left:304px;top:147px;width:190px;height:20px"></div>
<span style="left:309.5px;top:149px;font-size:11.5px;line-height:14px;letter-spacing:-0.37px">Stejné</span>
<svg style="left:478px;top:155px" width="9" height="6" viewBox="0 0 9 6"><path d="M.9 .9 L4.5 4.5 L8.1 .9" fill="none" stroke="#585858" stroke-width="1.7"/></svg>
<div class="hc" style="left:494px;top:127px;width:196px;height:20px"></div>
<span style="left:497px;top:130px;font-size:11.5px;line-height:14px;letter-spacing:0.27px;font-weight:bold">Vystaveno</span>
<div class="fc" style="left:494px;top:147px;width:196px;height:20px"></div>
<span style="left:499.5px;top:149px;font-size:11.5px;line-height:14px;letter-spacing:-0.37px">Stejné</span>
<svg style="left:674px;top:155px" width="9" height="6" viewBox="0 0 9 6"><path d="M.9 .9 L4.5 4.5 L8.1 .9" fill="none" stroke="#585858" stroke-width="1.7"/></svg>
<div class="hc" style="left:690px;top:127px;width:136px;height:20px"></div>
<span style="left:693px;top:130px;font-size:11.5px;line-height:14px;letter-spacing:0.14px;font-weight:bold">Příjemce</span>
<div class="fc" style="left:690px;top:147px;width:136px;height:20px"></div>
<span style="left:695.5px;top:149px;font-size:11.5px;line-height:14px;letter-spacing:-0.37px">Stejné</span>
<svg style="left:810px;top:155px" width="9" height="6" viewBox="0 0 9 6"><path d="M.9 .9 L4.5 4.5 L8.1 .9" fill="none" stroke="#585858" stroke-width="1.7"/></svg>
<div class="hc" style="left:826px;top:127px;width:112px;height:20px"></div>
<span style="left:829px;top:130px;font-size:11.5px;line-height:14px;letter-spacing:0.08px;font-weight:bold">Název</span>
<div class="fc" style="left:826px;top:147px;width:112px;height:20px"></div>
<span style="left:831.5px;top:149px;font-size:11.5px;line-height:14px;letter-spacing:-0.64px">Začíná na</span>
<svg style="left:922px;top:155px" width="9" height="6" viewBox="0 0 9 6"><path d="M.9 .9 L4.5 4.5 L8.1 .9" fill="none" stroke="#585858" stroke-width="1.7"/></svg>
<div class="hc" style="left:938px;top:127px;width:145px;height:20px"></div>
<span style="left:941px;top:130px;font-size:11.5px;line-height:14px;letter-spacing:-0.01px;font-weight:bold">K úhradě</span>
<div class="fc" style="left:938px;top:147px;width:145px;height:20px"></div>
<span style="left:943.5px;top:149px;font-size:11.5px;line-height:14px;letter-spacing:-0.37px">Stejné</span>
<svg style="left:1067px;top:155px" width="9" height="6" viewBox="0 0 9 6"><path d="M.9 .9 L4.5 4.5 L8.1 .9" fill="none" stroke="#585858" stroke-width="1.7"/></svg>
<div class="hc" style="left:1083px;top:127px;width:106px;height:20px"></div>
<span style="left:1086px;top:130px;font-size:11.5px;line-height:14px;letter-spacing:0.26px;font-weight:bold">Měna</span>
<div class="fc" style="left:1083px;top:147px;width:106px;height:20px"></div>
<span style="left:1088.5px;top:149px;font-size:11.5px;line-height:14px;letter-spacing:-0.64px">Začíná na</span>
<svg style="left:1173px;top:155px" width="9" height="6" viewBox="0 0 9 6"><path d="M.9 .9 L4.5 4.5 L8.1 .9" fill="none" stroke="#585858" stroke-width="1.7"/></svg>
<div style="left:204px;top:167px;width:985px;height:19px;background:#ffffad;border-left:1px solid #6e6c6e"></div>
<div style="left:204px;top:186px;width:985px;height:2px;background:#85838f"></div>
<div style="left:303px;top:167px;width:1px;height:19px;background:#85838f"></div>
<div style="left:493px;top:167px;width:1px;height:19px;background:#85838f"></div>
<div style="left:689px;top:167px;width:1px;height:19px;background:#85838f"></div>
<div style="left:825px;top:167px;width:1px;height:19px;background:#85838f"></div>
<div style="left:937px;top:167px;width:1px;height:19px;background:#85838f"></div>
<div style="left:1082px;top:167px;width:1px;height:19px;background:#85838f"></div>
<div style="left:1188px;top:167px;width:1px;height:19px;background:#85838f"></div>
<div style="left:204px;top:188px;width:985px;height:15px;background:#bccddf;border-left:1px solid #6e6c6e"></div>
<div style="left:204px;top:203px;width:985px;height:1px;background:#85838f"></div>
<div style="left:303px;top:188px;width:1px;height:15px;background:#85838f"></div>
<div style="left:493px;top:188px;width:1px;height:15px;background:#85838f"></div>
<div style="left:689px;top:188px;width:1px;height:15px;background:#85838f"></div>
<div style="left:825px;top:188px;width:1px;height:15px;background:#85838f"></div>
<div style="left:937px;top:188px;width:1px;height:15px;background:#85838f"></div>
<div style="left:1082px;top:188px;width:1px;height:15px;background:#85838f"></div>
<div style="left:1188px;top:188px;width:1px;height:15px;background:#85838f"></div>
<div style="left:204px;top:204px;width:985px;height:15px;background:#ffffff;border-left:1px solid #6e6c6e"></div>
<div style="left:204px;top:219px;width:985px;height:1px;background:#85838f"></div>
<div style="left:303px;top:204px;width:1px;height:15px;background:#85838f"></div>
<div style="left:493px;top:204px;width:1px;height:15px;background:#85838f"></div>
<div style="left:689px;top:204px;width:1px;height:15px;background:#85838f"></div>
<div style="left:825px;top:204px;width:1px;height:15px;background:#85838f"></div>
<div style="left:937px;top:204px;width:1px;height:15px;background:#85838f"></div>
<div style="left:1082px;top:204px;width:1px;height:15px;background:#85838f"></div>
<div style="left:1188px;top:204px;width:1px;height:15px;background:#85838f"></div>
<span style="left:1044.6px;top:188px;font-size:11.5px;line-height:14px;letter-spacing:-0.34px">0,0000</span>
<span style="left:1085.5px;top:188px;font-size:11.5px;line-height:14px;letter-spacing:-1.4px">CZK</span>
<span style="left:1044.6px;top:204px;font-size:11.5px;line-height:14px;letter-spacing:-0.34px">0,0000</span>
<span style="left:1085.5px;top:204px;font-size:11.5px;line-height:14px;letter-spacing:-1.4px">CZK</span>
<div style="left:1190px;top:127px;width:17px;height:171px;background:#fff"></div>
<div style="left:1190px;top:127px;width:17px;height:18px;background:#fff;border:1px solid #d4d2d4"></div>
<svg style="left:1194px;top:133px" width="9" height="6" viewBox="0 0 9 6"><path d="M1 5 L4.5 1.5 L8 5" fill="none" stroke="#555" stroke-width="1.3"/></svg>
<div style="left:1190px;top:282px;width:17px;height:17px;background:#fff;border:1px solid #d4d2d4"></div>
<svg style="left:1194px;top:288px" width="9" height="6" viewBox="0 0 9 6"><path d="M1 1 L4.5 4.5 L8 1" fill="none" stroke="#555" stroke-width="1.3"/></svg>
<div style="left:971px;top:299px;width:237px;height:4px;background:#f7f3f7"></div>
<div style="left:971px;top:303px;width:237px;height:1px;background:#6e6c6e"></div>
<div style="left:971px;top:304px;width:237px;height:1px;background:#b4b2b4"></div>
<div style="left:971px;top:305px;width:237px;height:180px;background:#f7f3f7"></div>
<div style="left:900px;top:312px;width:272px;height:30px;border:1px solid #a9c4e0;border-radius:5px"></div>
<span style="left:1014px;top:319px;font-size:12.5px;line-height:14px;letter-spacing:-0.4px;font-weight:bold">PDL</span>
<div style="left:1075px;top:315px;width:80px;height:19px;background:#e4e4e4;border:1px solid #a8a8a8"></div>
<span style="left:1103.5px;top:319px;font-size:12.5px;line-height:14px;letter-spacing:0.87px;font-weight:bold">900000</span>
<div style="left:971px;top:366px;width:218px;height:1px;background:#8e8c8e"></div>
<div style="left:971px;top:367px;width:218px;height:1px;background:#fff"></div>
<div style="left:1186px;top:367px;width:2px;height:120px;background:#fff"></div>
<div style="left:900px;top:377px;width:274px;height:130px;border:1px solid #a9c4e0;border-radius:5px"></div>
<div style="left:900px;top:390px;width:112px;height:19px;background:#e6e4e6;border:1px solid #b4b2b4"></div>
<div style="left:1012px;top:390px;width:16px;height:19px;background:#a2a0a2;border:1px solid #8e8c8e;border-top-color:#b0aeb0;border-left-color:#b0aeb0"></div>
<svg style="left:1016px;top:395px" width="8" height="9" viewBox="0 0 8 9"><path d="M3 0 H5 V3.5 H7.5 L4 7 L.5 3.5 H3Z M.5 8 H7.5 V9 H.5Z" fill="#c8c6c8"/></svg>
<span style="left:1047px;top:393px;font-size:11.5px;line-height:14px;letter-spacing:-0.98px">Čas</span>
<div style="left:1097px;top:390px;width:45px;height:19px;background:#e6e4e6;border:1px solid #b4b2b4"></div>
<span style="left:1097px;top:393px;font-size:11.5px;line-height:14px;letter-spacing:0px;text-align:right;width:40px">0,00</span>
<div style="left:1142px;top:390px;width:16px;height:19px;background:#a2a0a2;border:1px solid #8e8c8e;border-top-color:#b0aeb0;border-left-color:#b0aeb0"></div>
<svg style="left:1146px;top:395px" width="8" height="9" viewBox="0 0 8 9"><path d="M3 0 H5 V3.5 H7.5 L4 7 L.5 3.5 H3Z M.5 8 H7.5 V9 H.5Z" fill="#c8c6c8"/></svg>
<div style="left:900px;top:430px;width:112px;height:19px;background:#e6e4e6;border:1px solid #b4b2b4"></div>
<span style="left:900px;top:433px;font-size:11.5px;line-height:14px;letter-spacing:0px;text-align:right;width:108px">0</span>
<div style="left:1012px;top:430px;width:16px;height:19px;background:#a2a0a2;border:1px solid #8e8c8e;border-top-color:#b0aeb0;border-left-color:#b0aeb0"></div>
<svg style="left:1016px;top:435px" width="8" height="9" viewBox="0 0 8 9"><path d="M3 0 H5 V3.5 H7.5 L4 7 L.5 3.5 H3Z M.5 8 H7.5 V9 H.5Z" fill="#c8c6c8"/></svg>
<div style="left:900px;top:450px;width:112px;height:19px;background:#e6e4e6;border:1px solid #b4b2b4"></div>
<span style="left:900px;top:453px;font-size:11.5px;line-height:14px;letter-spacing:0px;text-align:right;width:108px">0</span>
<div style="left:1012px;top:450px;width:16px;height:19px;background:#a2a0a2;border:1px solid #8e8c8e;border-top-color:#b0aeb0;border-left-color:#b0aeb0"></div>
<svg style="left:1016px;top:455px" width="8" height="9" viewBox="0 0 8 9"><path d="M3 0 H5 V3.5 H7.5 L4 7 L.5 3.5 H3Z M.5 8 H7.5 V9 H.5Z" fill="#c8c6c8"/></svg>
<div style="left:1189px;top:305px;width:17px;height:180px;background:#d2d0d2;border-left:1px solid #c4c2c4"></div>
<div style="left:1189px;top:305px;width:17px;height:17px;background:#fff;border:1px solid #c8c6c8;border-bottom:1px solid #a4a2a4"></div>
<svg style="left:1193px;top:311px" width="9" height="6" viewBox="0 0 9 6"><path d="M1 5 L4.5 1.5 L8 5" fill="none" stroke="#555" stroke-width="1.3"/></svg>
<div style="left:1213px;top:72px;width:3px;height:410px;background:#efefff;border-top:1px solid #8a888a;border-left:1px solid #b8b6c0"></div>
<div style="left:1214px;top:93px;width:2px;height:2px;background:#9ab8e0"></div>
<div style="left:1214px;top:97px;width:2px;height:400px;background:#c0d2e8"></div>
<div style="left:199px;top:165px;width:773px;height:2px;background:#4e4c4e"></div>
<div style="left:199px;top:167px;width:773px;height:320px;background:#a6c3e1;border-right:1px solid #6f7f93"></div>
<div style="left:199px;top:193px;width:772px;height:28px;background:#9ebadb"></div>
<span style="left:223.8px;top:172px;font-size:16px;line-height:18px;letter-spacing:-0.59px">Speciálové volby</span>
<svg style="left:205px;top:173px" width="13" height="14" viewBox="0 0 13 14"><rect x="0" y="0.4" width="2.6" height="1.9" fill="#1a5cd0"/><rect x="4" y="0.3" width="4.5" height="2" fill="#1a6ad8"/><rect x="8.5" y="0.3" width="4.5" height="2" fill="#5ab0f4"/><rect x="0" y="3.15" width="2.6" height="1.9" fill="#1a5cd0"/><rect x="4" y="3.05" width="4.5" height="2" fill="#1a6ad8"/><rect x="8.5" y="3.05" width="4.5" height="2" fill="#5ab0f4"/><rect x="0" y="5.9" width="2.6" height="1.9" fill="#1a5cd0"/><rect x="4" y="5.8" width="4.5" height="2" fill="#70808c"/><rect x="8.5" y="5.8" width="4.5" height="2" fill="#98a4b0"/><rect x="0" y="8.65" width="2.6" height="1.9" fill="#1a5cd0"/><rect x="4" y="8.55" width="4.5" height="2" fill="#1a6ad8"/><rect x="8.5" y="8.55" width="4.5" height="2" fill="#5ab0f4"/><rect x="0" y="11.4" width="2.6" height="1.9" fill="#c83c3c"/><rect x="4" y="11.3" width="4.5" height="2" fill="#c83c3c"/><rect x="8.5" y="11.3" width="4.5" height="2" fill="#d86a6a"/></svg>
<div style="left:929px;top:172px;width:18px;height:18px;border:1px solid #7a96b8;background:#a9c5e2"></div>
<div style="left:933px;top:177px;width:9px;height:7px;border:2px solid #000"></div>
<div style="left:949px;top:172px;width:18px;height:18px;background:#cd6a57;border:1px solid #b85a48"></div>
<svg style="left:953px;top:178px;overflow:hidden" width="9" height="7" viewBox="0 0 9 7"><path d="M.4 -.5 L8.6 7.5 M8.6 -.5 L.4 7.5" stroke="#000" stroke-width="2.3"/></svg>
<div class="btn" style="left:204px;top:197px;background:#f4f1f5"></div>
<svg style="left:209px;top:200px" width="16" height="16" viewBox="0 0 16 16"><path d="M1 .5 H15 M1 2.5 H15 M1 4.5 H15 M1 6.5 H15 M1 8.5 H15 M1 10.5 H15 M1 12.5 H15 M1 14.5 H15" stroke="#484848" stroke-width="1" shape-rendering="crispEdges"/></svg>
<div class="btn" style="left:231px;top:197px;background:#f4f1f5"></div>
<svg style="left:236px;top:200px" width="16" height="16" viewBox="0 0 16 16"><path d="M.6 9 Q8 2 15.4 9 Q8 14.4 .6 9Z" fill="#fdf8e4" stroke="#f0bc18" stroke-width="1.2"/><path d="M.8 7.4 Q8 .6 15 6.6" fill="none" stroke="#f4c41c" stroke-width="1.6"/><path d="M4 3.4 L4.6 5" stroke="#f4c41c" stroke-width=".9"/><circle cx="8" cy="8.8" r="3.3" fill="#2a8cc0"/><circle cx="8" cy="8.6" r="1.9" fill="#05080c"/><circle cx="7" cy="7.6" r=".8" fill="#fff"/></svg>
<div class="btn" style="left:258px;top:197px;background:#f4f1f5"></div>
<svg style="left:263px;top:200px" width="16" height="16" viewBox="0 0 16 16"><path d="M1 1 H15 M1 3.8 H15" stroke="#111" stroke-width="1.4"/><g transform="translate(0,3.8) scale(1,.82)"><path d="M.6 9 Q8 2 15.4 9 Q8 14.4 .6 9Z" fill="#fdf8e4" stroke="#f0bc18" stroke-width="1.2"/><path d="M.8 7.4 Q8 .6 15 6.6" fill="none" stroke="#f4c41c" stroke-width="1.6"/><path d="M4 3.4 L4.6 5" stroke="#f4c41c" stroke-width=".9"/><circle cx="8" cy="8.8" r="3.3" fill="#2a8cc0"/><circle cx="8" cy="8.6" r="1.9" fill="#05080c"/><circle cx="7" cy="7.6" r=".8" fill="#fff"/></g><rect x="13" y="6.6" width="2.6" height="1.6" fill="#222"/></svg>
<div class="btn" style="left:285px;top:197px;background:#f4f1f5"></div>
<svg style="left:290px;top:200px" width="16" height="16" viewBox="0 0 16 16"><path d="M3 1.5 H11 L13.5 4 V14 H3 Z" fill="#fff" stroke="#2a86e0" stroke-width="1.4"/><path d="M11 1.5 V4 H13.5" fill="#d6e8fa" stroke="#8ab8e8" stroke-width=".6"/><path d="M9 8.5 L13.8 13.8" stroke="#e06020" stroke-width="1.8"/><path d="M8 7.4 L10 8.3 L8.8 9.6Z" fill="#f0c070"/></svg>
<div class="btn" style="left:312px;top:197px;background:#f4f1f5"></div>
<svg style="left:317px;top:200px" width="16" height="16" viewBox="0 0 16 16"><path d="M3 1.5 H13.5 V14 H3 Z" fill="#fff" stroke="#2a86e0" stroke-width="1.4"/><path d="M4.5 3 H12 V8 L8 12 H4.5Z" fill="#fbc21c"/><path d="M13 6 L8 12" stroke="#e07020" stroke-width="1.8"/></svg>
<div class="btn" style="left:339px;top:197px;background:#f4f1f5"></div>
<svg style="left:344px;top:200px" width="16" height="16" viewBox="0 0 16 16"><rect x="4" y="4.5" width="8.5" height="10" rx="1" fill="#f4bc1c" stroke="#5a80b0" stroke-width=".9"/><path d="M6.4 6.5 V13 M8.3 6.5 V13 M10.2 6.5 V13" stroke="#d89410" stroke-width=".9"/><rect x="3" y="2.7" width="10.5" height="2" rx=".6" fill="#e8b020" stroke="#5a80b0" stroke-width=".8"/><rect x="6.5" y="1.2" width="3.6" height="1.5" fill="#5a80b0"/></svg>
<div class="btn" style="left:366px;top:197px;background:#f4f1f5"></div>
<svg style="left:371px;top:200px" width="16" height="16" viewBox="0 0 16 16"><path d="M1.5 1.2 H9 V12 H1.5 Z" fill="#fff" stroke="#2a86e0" stroke-width="1.2"/><path d="M2.6 3 V8" stroke="#f8c840" stroke-width="1"/><path d="M4.6 2.4 H11.4 L13.6 4.6 V13.6 H4.6 Z" fill="#fff" stroke="#2a86e0" stroke-width="1.2"/><path d="M9.4 8.6 L13.4 13" stroke="#e06820" stroke-width="1.6"/><path d="M8.6 7.6 L10.3 8.4 L9.2 9.5Z" fill="#f0c070"/></svg>
<div class="btn" style="left:393px;top:197px;background:#f4f1f5"></div>
<svg style="left:398px;top:200px" width="16" height="16" viewBox="0 0 16 16"><path d="M1.5 8.5 L4 7 L6.5 10.5 L13.5 2 L15.5 3.5 L7 14.5Z" fill="#f0a020"/></svg>
<div class="btn" style="left:420px;top:197px;background:#f4f1f5"></div>
<svg style="left:425px;top:200px" width="16" height="16" viewBox="0 0 16 16"><path d="M1 2 H15.5 M1 5 H15.5 M1 8 H15.5 M1 11 H15.5 M1 14 H15.5" stroke="#1a1a1a" stroke-width="1.4"/><circle cx="11.5" cy="2.6" r="2.2" fill="#5ab0e8"/><path d="M8.4 11.6 Q8.2 5 11.5 5 Q14.8 5 14.6 11.6Z" fill="#4aa4e4"/><circle cx="5.8" cy="6.4" r="2.2" fill="#f8a040"/><path d="M2.4 15 Q2.2 8.8 5.8 8.8 Q9.4 8.8 9.2 15Z" fill="#f89830"/></svg>
<div class="btn" style="left:447px;top:197px;background:#f4f1f5"></div>
<svg style="left:452px;top:200px" width="16" height="16" viewBox="0 0 16 16"><path d="M1.2 2.8 Q8 -.2 14.8 2.8 L9.6 9 V14.6 L6.6 13 V9 Z" fill="#2a86d8" stroke="#1a5cae" stroke-width=".6"/><ellipse cx="8" cy="2.8" rx="6.4" ry="1.5" fill="#7cc0f4"/><path d="M1.8 3.3 Q8 5.6 14.2 3.3" fill="none" stroke="#e8b838" stroke-width=".9"/></svg>
<div class="btn" style="left:474px;top:197px;background:#f4f1f5"></div>
<svg style="left:479px;top:200px" width="16" height="16" viewBox="0 0 16 16"><path d="M2.6 .8 H10 L13 3.8 V14 H2.6 Z" fill="#fff" stroke="#3a9a44" stroke-width="1.2"/><rect x="1" y="2.6" width="3.6" height="2" fill="#d42020"/><path d="M5.6 7.6 L10.6 13 M10.6 7.6 L5.6 13" stroke="#1e8a2c" stroke-width="1.9"/></svg>
<div class="btn" style="left:501px;top:197px;background:#f4f1f5"></div>
<svg style="left:506px;top:200px" width="16" height="16" viewBox="0 0 16 16"><rect x="2.5" y="1.5" width="11" height="13" rx="1" fill="#dcecfc" stroke="#5a9fe0" stroke-width="1.2"/><path d="M3.5 5 H12.5 M3.5 7 H12.5 M3.5 9 H12.5 M3.5 11 H12.5" stroke="#b8d4f0" stroke-width=".6"/><path d="M4 1 V2.6 M6 1 V2.6 M8 1 V2.6 M10 1 V2.6 M12 1 V2.6" stroke="#9a7a4a" stroke-width=".8"/><path d="M5.4 11.6 L11 5.6" stroke="#f0a020" stroke-width="2.2"/><path d="M4.4 12.8 L6.2 12.2 L5 11Z" fill="#333"/><path d="M10.6 5 L12 6.4" stroke="#d84040" stroke-width="2.2"/></svg>
<div class="btn" style="left:528px;top:197px;background:#f4f1f5"></div>
<svg style="left:533px;top:200px" width="16" height="16" viewBox="0 0 16 16"><rect x="3.4" y="1" width="7" height="6.6" fill="#f0f6ff" stroke="#5a9ae8" stroke-width="1.1"/><rect x="1.4" y="9.6" width="8" height="2.2" fill="#2a50b0"/><path d="M6.8 7.6 V9.6" stroke="#5a9ae8" stroke-width="1.2"/><rect x="7.4" y="6.6" width="7.4" height="7" fill="none" stroke="#f0a050" stroke-width="1.6"/></svg>
<div class="btn" style="left:555px;top:197px;background:#f4f1f5"></div>
<svg style="left:560px;top:200px" width="16" height="16" viewBox="0 0 16 16"><rect x="1.5" y="4" width="13.5" height="11.5" rx="1" fill="#1a86d0" stroke="#0a5fa8" stroke-width=".6"/><circle cx="8" cy="10" r="4.6" fill="#eef6ff"/><path d="M8 7 V10 L10.2 11.6" stroke="#223" stroke-width="1" fill="none"/><path d="M4 6.5 Q5 1 10 2.5 L10.5 .5 L14 5 L8.5 6.5 L9.3 4.6 Q6.5 4 6 7Z" fill="#fbb21c" stroke="#e89010" stroke-width=".5"/></svg>
<div class="btn" style="left:582px;top:197px;background:#f4f1f5"></div>
<svg style="left:587px;top:200px" width="16" height="16" viewBox="0 0 16 16"><rect x="9" y="1" width="5.5" height="13" fill="#d8d8d8" stroke="#888" stroke-width=".8"/><circle cx="7" cy="9.5" r="5.8" fill="#1a2a78"/><path d="M7 9.5 L2 6 A6 6 0 0 1 8 3.7Z" fill="#6ab0f0"/><path d="M7 9.5 L12 13 A6 6 0 0 1 6 15.3Z" fill="#4878d0"/><circle cx="7" cy="9.5" r="1.6" fill="#e8e8f0"/></svg>
<div class="btn" style="left:609px;top:197px;background:#f4f1f5"></div>
<svg style="left:614px;top:200px" width="16" height="16" viewBox="0 0 16 16"><circle cx="8" cy="8" r="7.3" fill="#1a8fe0"/><circle cx="8" cy="8" r="7.3" fill="none" stroke="#0a5fb0" stroke-width=".6"/><text x="8" y="12.3" text-anchor="middle" font-family="Liberation Sans" font-weight="bold" font-size="12" fill="#fff">?</text></svg>
<div style="left:640px;top:199px;width:1px;height:18px;background:#8498b4"></div>
<div class="btn" style="left:644px;top:197px;background:#f4f1f5"></div>
<svg style="left:649px;top:200px" width="16" height="16" viewBox="0 0 16 16"><path d="M5.5 .8 H12.5 L13.8 5.5 H4.2Z" fill="#fafafa" stroke="#9a9a9a" stroke-width=".7"/><path d="M3 5 H14 L15.6 8.2 H.8Z" fill="#2e2e34"/><path d="M.8 8.2 H15.6 V12 Q15.6 13 14.6 13 H10 V10 H3 V12.5 H.8Z" fill="#90929a"/><path d="M.8 8.2 H15.6 V9.4 H.8Z" fill="#5a5c64"/><path d="M3.2 10.2 H10 L8.8 15.4 L1 14Z" fill="#36b2ea"/></svg>
<div style="left:204px;top:219px;width:747px;height:260px;background:#6e6c6e"></div>
<div style="left:205px;top:220px;width:745px;height:260px;background:#f7f3f7"></div>
<div class="hc" style="left:204px;top:220px;width:150px;height:21px"></div>
<span style="left:206.5px;top:223px;font-size:11.5px;line-height:14px;letter-spacing:-0.34px;font-weight:bold">Kód</span>
<div class="fc" style="left:204px;top:241px;width:150px;height:20px"></div>
<span style="left:209.5px;top:243px;font-size:11.5px;line-height:14px;letter-spacing:-0.64px">Začíná na</span>
<svg style="left:338px;top:249px" width="9" height="6" viewBox="0 0 9 6"><path d="M.9 .9 L4.5 4.5 L8.1 .9" fill="none" stroke="#585858" stroke-width="1.7"/></svg>
<div class="hc" style="left:354px;top:220px;width:105px;height:21px"></div>
<span style="left:356.5px;top:223px;font-size:11.5px;line-height:14px;letter-spacing:0.13px;font-weight:bold">Hodnota</span>
<div class="fc" style="left:354px;top:241px;width:105px;height:20px"></div>
<span style="left:359.5px;top:243px;font-size:11.5px;line-height:14px;letter-spacing:-0.64px">Začíná na</span>
<svg style="left:443px;top:249px" width="9" height="6" viewBox="0 0 9 6"><path d="M.9 .9 L4.5 4.5 L8.1 .9" fill="none" stroke="#585858" stroke-width="1.7"/></svg>
<div class="hc" style="left:459px;top:220px;width:110px;height:21px"></div>
<span style="left:461.5px;top:223px;font-size:11.5px;line-height:14px;letter-spacing:0.22px;font-weight:bold">Parametr</span>
<div class="fc" style="left:459px;top:241px;width:110px;height:20px"></div>
<span style="left:464.5px;top:243px;font-size:11.5px;line-height:14px;letter-spacing:-0.64px">Začíná na</span>
<svg style="left:553px;top:249px" width="9" height="6" viewBox="0 0 9 6"><path d="M.9 .9 L4.5 4.5 L8.1 .9" fill="none" stroke="#585858" stroke-width="1.7"/></svg>
<div class="hc" style="left:569px;top:220px;width:203px;height:21px"></div>
<span style="left:571.5px;top:223px;font-size:11.5px;line-height:14px;letter-spacing:0.3px;font-weight:bold">Hodnota parametru</span>
<div class="fc" style="left:569px;top:241px;width:203px;height:20px"></div>
<span style="left:574.5px;top:243px;font-size:11.5px;line-height:14px;letter-spacing:-0.64px">Začíná na</span>
<svg style="left:756px;top:249px" width="9" height="6" viewBox="0 0 9 6"><path d="M.9 .9 L4.5 4.5 L8.1 .9" fill="none" stroke="#585858" stroke-width="1.7"/></svg>
<div class="hc" style="left:772px;top:220px;width:178px;height:21px"></div>
<span style="left:774.5px;top:223px;font-size:11.5px;line-height:14px;letter-spacing:0.22px;font-weight:bold">Poznámka k nastavení</span>
<div class="fc" style="left:772px;top:241px;width:178px;height:20px"></div>
<span style="left:777.5px;top:243px;font-size:11.5px;line-height:14px;letter-spacing:-0.64px">Začíná na</span>
<div style="left:204px;top:261px;width:746px;height:17px;background:#ffffad;border-left:1px solid #6e6c6e"></div>
<div style="left:204px;top:278px;width:746px;height:2px;background:#85838f"></div>
<div style="left:353px;top:261px;width:1px;height:17px;background:#85838f"></div>
<div style="left:458px;top:261px;width:1px;height:17px;background:#85838f"></div>
<div style="left:568px;top:261px;width:1px;height:17px;background:#85838f"></div>
<div style="left:771px;top:261px;width:1px;height:17px;background:#85838f"></div>
<div style="left:949px;top:261px;width:1px;height:17px;background:#85838f"></div>
<div style="left:204px;top:280px;width:746px;height:15px;background:#3399ff;border-left:1px solid #6e6c6e"></div>
<div style="left:204px;top:295px;width:746px;height:1px;background:#85838f"></div>
<div style="left:353px;top:280px;width:1px;height:15px;background:#85838f"></div>
<div style="left:458px;top:280px;width:1px;height:15px;background:#85838f"></div>
<div style="left:568px;top:280px;width:1px;height:15px;background:#85838f"></div>
<div style="left:771px;top:280px;width:1px;height:15px;background:#85838f"></div>
<div style="left:949px;top:280px;width:1px;height:15px;background:#85838f"></div>
<span style="left:205.5px;top:280px;font-size:11.5px;line-height:14px;letter-spacing:-0.14px;color:#fff">orsoft.l.expedice.Lqa0-001</span>
<span style="left:357px;top:280px;font-size:11.5px;line-height:14px;letter-spacing:-0.54px;color:#fff">Avizo (EP)</span>
<span style="left:461px;top:280px;font-size:11.5px;line-height:14px;letter-spacing:-0.3px;color:#fff">spoustenaTrida</span>
<span style="left:570.5px;top:280px;font-size:11.5px;line-height:14px;letter-spacing:-0.22px;color:#fff">cz.ortex.gui.l0.expedice.LEPAvizo</span>
<span class="t b" style="left:328px;top:222px;letter-spacing:0;font-size:12px">1</span>
<svg style="left:327px;top:232px" width="9" height="6" viewBox="0 0 9 6"><path d="M0 0 H9 L4.5 5Z" fill="#2a7fe0"/></svg>
<div style="left:951px;top:219px;width:15px;height:260px;background:#fff"></div>
<div style="left:951px;top:219px;width:15px;height:17px;border:1px solid #dcdadc"></div>
<div style="left:204px;top:296px;width:1px;height:180px;background:#a4a2a8"></div>
<div style="left:950px;top:296px;width:1px;height:180px;background:#a4a2a8"></div>
<svg style="left:954px;top:225px" width="9" height="6" viewBox="0 0 9 6"><path d="M1 5 L4.5 1.5 L8 5" fill="none" stroke="#555" stroke-width="1.3"/></svg>
<svg style="left:0;top:0" width="1216" height="475" viewBox="0 0 1216 475"><ellipse cx="781.8" cy="113.3" rx="20" ry="21" fill="none" stroke="#000" stroke-width="1"/><path d="M778 134.5 L740 215 M739 194 L756.7 202.5 L740 215 Z" fill="none" stroke="#000" stroke-width="1"/></svg>
</body></html>
